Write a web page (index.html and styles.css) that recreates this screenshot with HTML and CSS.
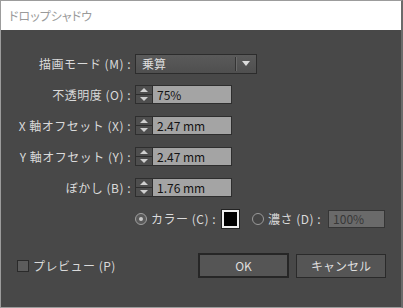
FILE: index.html
```html
<!DOCTYPE html>
<html lang="ja">
<head>
    <meta charset="UTF-8">
    <title>ドロップシャドウ</title>
    <link rel="stylesheet" href="styles.css">
</head>
<body>
    <div class="dialog">
        <div class="titlebar">ドロップシャドウ</div>
        <div class="content">
            <div class="fields">
                <!-- blend mode -->
                <label class="field-label">描画モード (M) :</label>
                <div class="select">
                    <span class="select-value">乗算</span>
                    <span class="select-divider"></span>
                    <span class="select-arrow"></span>
                </div>

                <!-- opacity -->
                <label class="field-label">不透明度 (O) :</label>
                <div class="spin-field">
                    <span class="spinner"><span class="up"></span><span class="down"></span></span>
                    <span class="spin-input">75%</span>
                </div>

                <!-- x offset -->
                <label class="field-label">X 軸オフセット (X) :</label>
                <div class="spin-field">
                    <span class="spinner"><span class="up"></span><span class="down"></span></span>
                    <span class="spin-input">2.47 mm</span>
                </div>

                <!-- y offset -->
                <label class="field-label">Y 軸オフセット (Y) :</label>
                <div class="spin-field">
                    <span class="spinner"><span class="up"></span><span class="down"></span></span>
                    <span class="spin-input">2.47 mm</span>
                </div>

                <!-- blur -->
                <label class="field-label">ぼかし (B) :</label>
                <div class="spin-field">
                    <span class="spinner"><span class="up"></span><span class="down"></span></span>
                    <span class="spin-input">1.76 mm</span>
                </div>

                <span></span>
                <div class="color-row">
                    <span class="radio checked"></span>
                    <span class="option-label">カラー (C) :</span>
                    <span class="swatch"></span>
                    <span class="radio second"></span>
                    <span class="option-label">濃さ (D) :</span>
                    <span class="disabled-input">100%</span>
                </div>
            </div>

            <div class="footer">
                <span class="checkbox"></span>
                <span class="option-label">プレビュー (P)</span>
                <div class="buttons">
                    <button class="btn btn-default">OK</button>
                    <button class="btn">キャンセル</button>
                </div>
            </div>
        </div>
    </div>
</body>
</html>
```

FILE: styles.css
```css
body {
    margin: 0;
    font-family: "Noto Sans CJK JP", "Noto Sans", sans-serif;
    font-size: 12px;
}

.dialog {
    width: 403px;
    height: 308px;
    box-sizing: border-box;
    border: 1px solid #9c9c9c;
    border-right: 2px solid #6a6a6a;
    background: #484848;
    display: flex;
    flex-direction: column;
}

.titlebar {
    height: 29px;
    background: #ffffff;
    color: #9a9a9a;
    padding-left: 8px;
    line-height: 29px;
    font-feature-settings: "palt";
}

.content {
    flex: 1;
    display: flex;
    flex-direction: column;
    padding-top: 24px;
}

.fields {
    display: grid;
    grid-template-columns: 130px auto;
    column-gap: 4px;
    row-gap: 12px;
    grid-auto-rows: 19px;
    align-items: center;
}

.field-label {
    text-align: right;
    color: #dadada;
    white-space: nowrap;
    letter-spacing: 0.5px;
}

/* dropdown */
.select {
    width: 122px;
    height: 20px;
    box-sizing: border-box;
    border: 1px solid #2c2c2c;
    background: linear-gradient(#5a5a5a, #4f4f4f);
    display: flex;
    align-items: center;
}
.select-value {
    flex: 1;
    color: #dcdcdc;
    padding-left: 6px;
}
.select-divider {
    width: 1px;
    height: 14px;
    background: #333;
    border-right: 1px solid #6a6a6a;
}
.select-arrow {
    width: 0;
    height: 0;
    margin: 0 6px 0 5px;
    border-left: 4px solid transparent;
    border-right: 4px solid transparent;
    border-top: 5px solid #dcdcdc;
}

/* spinner + text field */
.spin-field {
    display: flex;
    height: 19px;
}
.spinner {
    width: 17px;
    box-sizing: border-box;
    border: 1px solid #2e2e2e;
    border-right: none;
    background: #4e4e4e;
    display: flex;
    flex-direction: column;
}
.spinner .up, .spinner .down {
    flex: 1;
    display: flex;
    align-items: center;
    justify-content: center;
}
.spinner .up {
    border-bottom: 1px solid #2e2e2e;
}
.spinner .up::after, .spinner .down::after {
    content: "";
    border-left: 4px solid transparent;
    border-right: 4px solid transparent;
}
.spinner .up::after {
    border-bottom: 4px solid #d0d0d0;
}
.spinner .down::after {
    border-top: 4px solid #d0d0d0;
}
.spin-input {
    width: 80px;
    box-sizing: border-box;
    border: 1px solid #2e2e2e;
    background: #a4a4a4;
    color: #141414;
    padding-left: 4px;
    line-height: 17px;
}

/* colour / darkness row */
.color-row {
    display: flex;
    align-items: center;
    height: 18px;
}
.radio {
    width: 12px;
    height: 12px;
    box-sizing: border-box;
    border-radius: 50%;
    border: 1px solid #8a8a8a;
    background: #3c3c3c;
    margin-right: 4px;
    display: flex;
    align-items: center;
    justify-content: center;
}
.radio.checked {
    border-color: #a0a0a0;
    background: #5a5a5a;
}
.radio.checked::after {
    content: "";
    width: 4px;
    height: 4px;
    border-radius: 50%;
    background: #c8c8c8;
}
.radio.second {
    margin-left: 13px;
    border-color: #9a9a9a;
    background: #454545;
}
.option-label {
    color: #dadada;
    white-space: nowrap;
    letter-spacing: 0.5px;
}
.swatch {
    width: 17px;
    height: 18px;
    box-sizing: border-box;
    margin-left: 6px;
    background: #000;
    border: 2px solid #f0f0f0;
    outline: 1px solid #222;
}
.disabled-input {
    width: 57px;
    height: 18px;
    box-sizing: border-box;
    margin-left: 7px;
    border: 1px solid #353535;
    background: #6a6a6a;
    color: #383838;
    padding-left: 4px;
    line-height: 16px;
}

/* bottom */
.footer {
    display: flex;
    align-items: center;
    padding: 25px 15px 0 16px;
}
.checkbox {
    width: 12px;
    height: 12px;
    box-sizing: border-box;
    border: 1px solid #2a2a2a;
    background: #5c5c5c;
    margin-right: 4px;
}
.buttons {
    margin-left: auto;
    display: flex;
    gap: 7px;
    align-items: center;
}
.btn {
    font-family: inherit;
    font-size: 12px;
    width: 90px;
    height: 24px;
    padding: 0;
    border: 1px solid #2a2a2a;
    background: #555555;
    color: #dedede;
}
.btn-default {
    width: 91px;
    height: 25px;
    border: 2px solid #262626;
}
```
